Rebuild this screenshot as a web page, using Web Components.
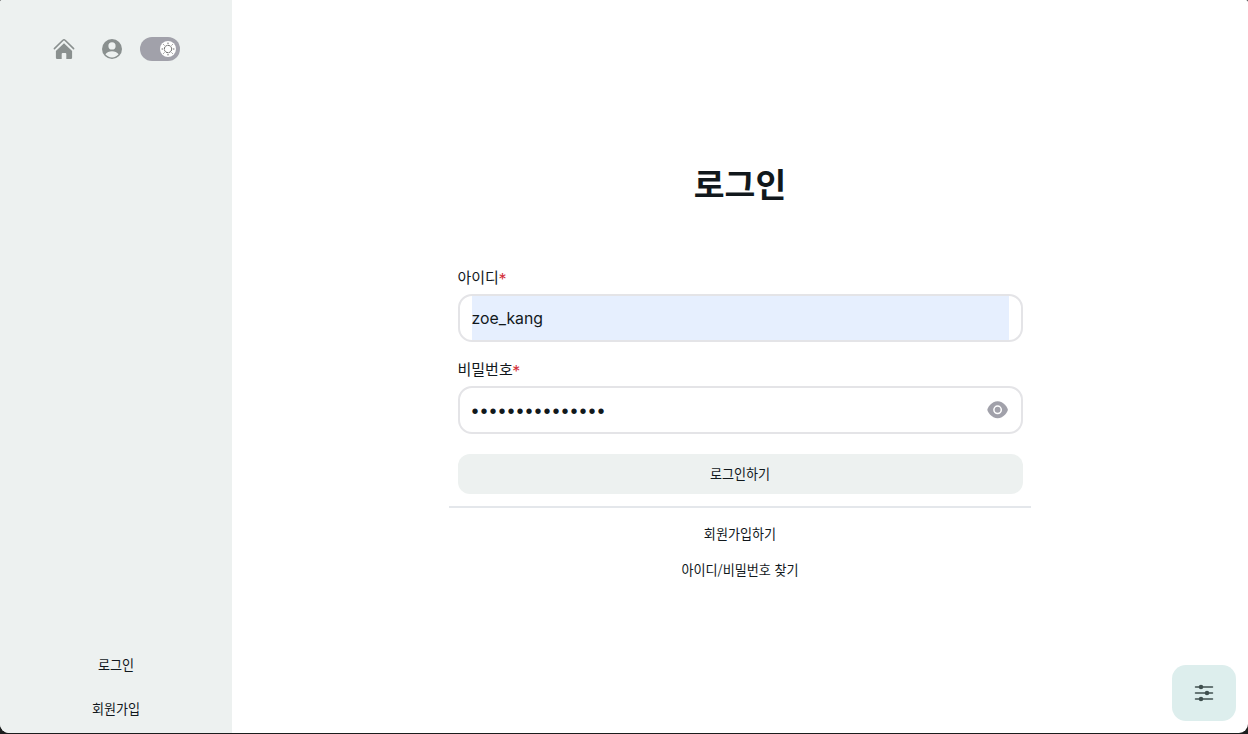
<!DOCTYPE html>
<html lang="ko">
<head>
<meta charset="utf-8">
<title>로그인</title>
<style>
html,body{margin:0;height:100%;background:#1b1d1d;overflow:hidden}
body{font-family:"Noto Sans CJK KR","Inter",sans-serif;color:#11181c}
</style>
</head>
<body>
<app-shell>
  <side-bar slot="side"></side-bar>
  <login-form></login-form>
  <settings-button slot="fab"></settings-button>
</app-shell>
<script>
const define = (name, html) => {
  const t = document.createElement('template');
  t.innerHTML = html;
  customElements.define(name, class extends HTMLElement {
    constructor() {
      super();
      this.attachShadow({mode: 'open'}).append(t.content.cloneNode(true));
    }
  });
};

define('theme-switch', `
<style>
:host{display:flex;align-items:center;justify-content:flex-end;box-sizing:border-box;width:40px;height:24px;padding:0 4px;border-radius:12px;background:#a1a1aa}
.thumb{display:flex;align-items:center;justify-content:center;width:16px;height:16px;border-radius:50%;background:#fff}
svg{display:block}
</style>
<span class="thumb"><svg width="14" height="14" viewBox="0 0 14 14" fill="none" stroke="#555" stroke-width=".9" stroke-linecap="round"><circle cx="7" cy="7" r="3.7" stroke-dasharray="1.7 1.2"/><path d="M7 1v.6M7 12.4v.6M1 7h.6M12.4 7h.6M2.7 2.7l.4.4M10.9 10.9l.4.4M2.7 11.3l.4-.4M10.9 3.1l.4-.4"/></svg></span>`);

define('side-bar', `
<style>
:host{display:flex;flex-direction:column;justify-content:space-between;box-sizing:border-box;width:232px;height:100%;padding:37px 0 12px;background:#edf1f0}
.tools{display:flex;align-items:center;padding-left:52px}
.tools svg{display:block;width:24px;height:24px}
.tools svg + svg{margin-left:24px}
theme-switch{margin-left:16px}
nav{display:flex;flex-direction:column;align-items:center;gap:20px;font-size:13.1px;line-height:24px}
</style>
<div class="tools">
<svg viewBox="0 0 24 24"><path d="M2.4 11.6 10.9 3.3a1.5 1.5 0 0 1 2.2 0l8.5 8.3" fill="none" stroke="#8a908f" stroke-width="1.6" stroke-linecap="round"/><path d="M12 6.2 3.9 14v6.5c0 .9.7 1.6 1.6 1.6h4.2v-5.2c0-.5.4-.9.9-.9h2.8c.5 0 .9.4.9.9v5.2h4.2c.9 0 1.6-.7 1.6-1.6V14z" fill="#8a908f"/></svg>
<svg viewBox="0 0 24 24"><circle cx="12" cy="12" r="10" fill="#8a908f"/><circle cx="12" cy="8.9" r="3.6" fill="#edf1f0"/><path d="M5.4 17.3c1.4-2 3.9-3 6.6-3s5.2 1 6.6 3A8.4 8.4 0 0 1 12 20.4a8.4 8.4 0 0 1-6.6-3.1z" fill="#edf1f0"/></svg>
<theme-switch></theme-switch>
</div>
<nav><span>로그인</span><span>회원가입</span></nav>`);

define('form-field', `
<style>
:host{display:flex;flex-direction:column;font-size:15px}
label{height:25px;line-height:24px;margin-bottom:4px}
b{font:400 16px/20px "Inter",sans-serif;color:#d32f3a;vertical-align:-2px;margin-left:-.5px}
.box{display:flex;align-items:stretch;box-sizing:border-box;height:48px;padding:0 12px;border:2px solid #e4e4e7;border-radius:14px;background:#fff}
</style>
<label><slot name="label"></slot><b>*</b></label>
<div class="box"><slot></slot></div>`);

define('eye-icon', `
<style>:host{display:block;align-self:center;width:22px;height:20px;margin-left:auto}svg{display:block}</style>
<svg width="22" height="20" viewBox="0 0 22 20"><path d="M.3 9.8C.3 8.1 4.6 1.3 10.6 1.3S20.9 8.1 20.9 9.8 16.6 18.3 10.6 18.3.3 11.5.3 9.8z" fill="#a1a1aa"/><circle cx="10.6" cy="9.8" r="3.7" fill="none" stroke="#fff" stroke-width="1.5"/></svg>`);

define('login-form', `
<style>
:host{display:flex;flex-direction:column;width:582px;padding-top:159px}
h1{margin:0 0 58px;font-size:33.5px;line-height:48px;font-weight:700;text-align:center}
.fields{display:flex;flex-direction:column;gap:15px;padding:0 8.5px}
.value{flex:1;background:#e6effe;font:15.8px/46px "Inter",sans-serif}
.dots{font:20px/46px "Liberation Sans",sans-serif;letter-spacing:2px}
button{height:40px;margin:5px 0 0;padding:0 0 2px;border:0;border-radius:12px;background:#edf1f0;color:inherit;font:13.1px "Noto Sans CJK KR",sans-serif}
hr{width:100%;height:2px;margin:12px 0 14px;border:0;background:#e4e7eb}
.links{display:flex;flex-direction:column;align-items:center;gap:12px;font-size:13.1px;line-height:24px}
</style>
<h1>로그인</h1>
<div class="fields">
<form-field><span slot="label">아이디</span><span class="value">zoe_kang</span></form-field>
<form-field><span slot="label">비밀번호</span><span class="dots">•••••••••••••••</span><eye-icon></eye-icon></form-field>
<button>로그인하기</button>
</div>
<hr>
<div class="links"><span>회원가입하기</span><span>아이디/비밀번호 찾기</span></div>`);

define('settings-button', `
<style>
:host{display:flex;align-items:center;justify-content:center;width:64px;height:56px;border-radius:14px;background:#ddeeed}
svg{display:block}
</style>
<svg width="20" height="18" viewBox="0 0 20 18" fill="#40504f" stroke="#40504f" stroke-width="1.5" stroke-linecap="round"><path d="M1.5 3h17M1.5 9h17M1.5 15h17"/><circle cx="7" cy="3" r="1.5"/><circle cx="13" cy="9" r="1.5"/><circle cx="7" cy="15" r="1.5"/></svg>`);

define('app-shell', `
<style>
:host{display:flex;position:relative;height:733px;overflow:hidden;border-radius:2px 2px 9px 9px;background:#fff}
main{flex:1;display:flex;justify-content:center}
.fab{position:absolute;right:12px;bottom:12px}
</style>
<slot name="side"></slot>
<main><slot></slot></main>
<div class="fab"><slot name="fab"></slot></div>`);
</script>
</body>
</html>
